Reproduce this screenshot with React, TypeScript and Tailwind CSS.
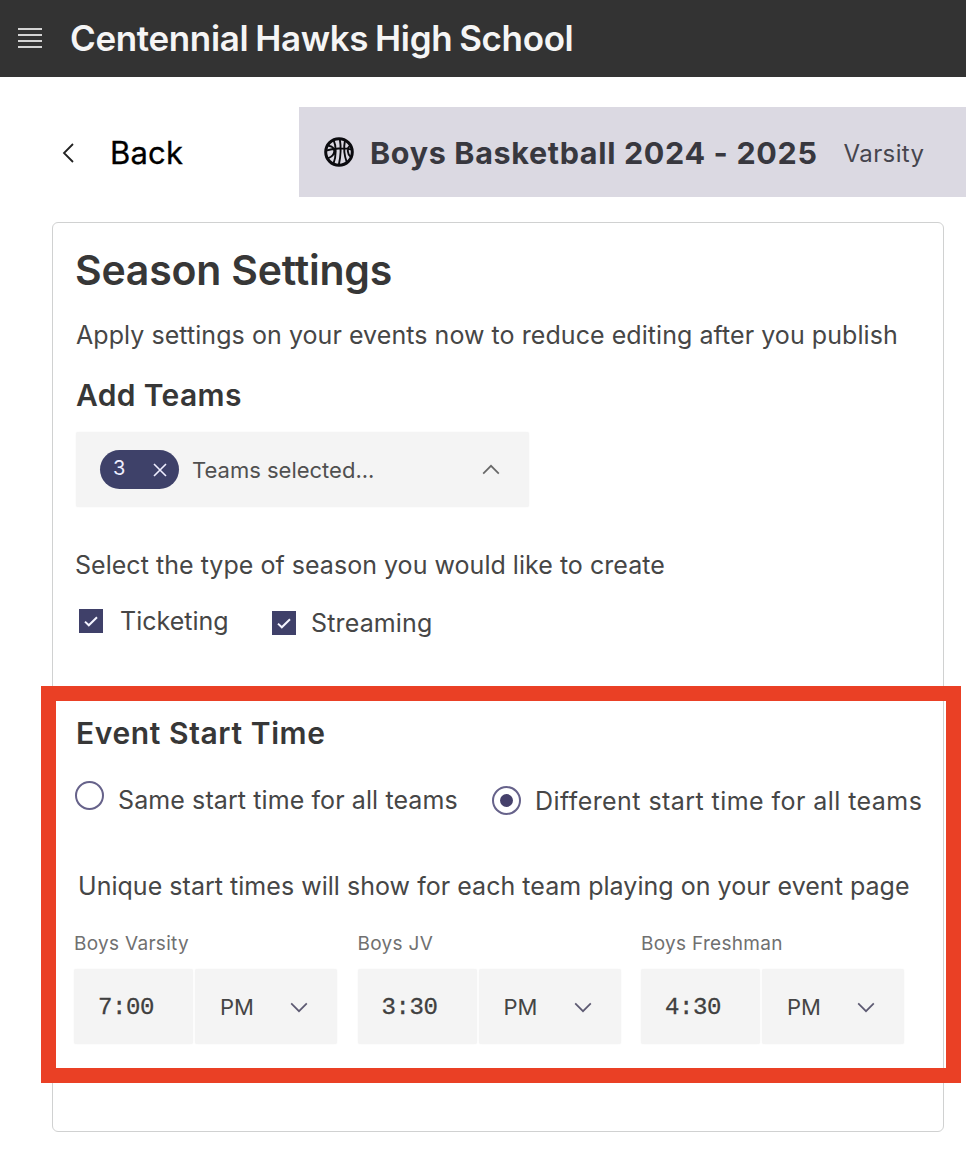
type IconProps = { className?: string };

function Chevron({ className = "" }: IconProps) {
  return (
    <svg viewBox="0 0 18 11" fill="none" stroke="currentColor" strokeWidth="1.7" className={`h-[11px] w-[18px] shrink-0 ${className}`}>
      <path d="M1.2 1.4 L9 9.2 L16.8 1.4" />
    </svg>
  );
}

function Basketball() {
  return (
    <svg viewBox="0 0 30 30" fill="none" stroke="#0b0b0f" className="size-[30px] shrink-0">
      <circle cx="15" cy="15" r="13.3" strokeWidth="3" />
      <path strokeWidth="1.9" d="M2 13.6C9 11.2 20 10.6 28 12.6M15.8 2C17.2 10 16.6 20 14.8 28M9.6 3.2C12.4 9 12.4 19 9.4 27M21 3.2C19.6 10 20 18 23 26M4.2 8.6C12.6 10 12 18 4.2 21.2M26 8.8C22.8 11 23 17 27 20.4" />
    </svg>
  );
}

function Checkbox() {
  return (
    <span className="flex size-6 shrink-0 items-center justify-center bg-[#3f4069]">
      <svg viewBox="0 0 14 11" fill="none" stroke="#f4f4ff" strokeWidth="2" className="h-[11px] w-[14px]">
        <path d="M1 5.6 L4.8 9.3 L13 1.2" />
      </svg>
    </span>
  );
}

function Radio({ checked = false }: { checked?: boolean }) {
  return (
    <span className="flex size-[29px] shrink-0 items-center justify-center rounded-full border-2 border-[#66628a] bg-white">
      {checked && <span className="size-[13px] rounded-full bg-[#45406b]" />}
    </span>
  );
}

function TimeField({ label, time }: { label: string; time: string }) {
  return (
    <div className="w-[263px]">
      <div className="h-[25px] text-[19px] leading-[25px] tracking-[0.3px] text-[#707070]">{label}</div>
      <div className="mt-[13px] flex h-[75px] gap-[2px]">
        <div className="flex w-[119px] items-center rounded-[2px] bg-[#f4f4f4] pt-[2px] pl-[24px] font-['Liberation_Mono',monospace] text-[24px] tracking-[-0.4px] text-[#404040] shadow-[0_0_2px_#f4f4f4] [-webkit-text-stroke:0.3px_#404040]">
          {time}
        </div>
        <div className="flex flex-1 items-center justify-between rounded-[2px] bg-[#f4f4f4] pt-px pr-[29px] pl-[25px] text-[22px] text-[#454545] shadow-[0_0_2px_#f4f4f4]">
          <span>PM</span>
          <Chevron className="text-[#5d5a72]" />
        </div>
      </div>
    </div>
  );
}

export default function App() {
  return (
    <div className="relative h-[1164px] w-[966px] overflow-hidden bg-white font-['Inter',sans-serif] text-[#464646]">
      <header className="flex h-[77px] items-center bg-[#333333] pl-[18px]">
        <svg viewBox="0 0 24 22" fill="none" stroke="#d4d4d4" strokeWidth="2" className="-mt-px h-[22px] w-6 shrink-0">
          <path d="M0 2H24M0 8H24M0 14H24M0 20H24" />
        </svg>
        <h1 className="ml-[28px] text-[35px] leading-none font-semibold tracking-[-0.36px] whitespace-nowrap text-[#f5f5f5] [word-spacing:-1.5px]">
          Centennial Hawks High School
        </h1>
      </header>

      <div className="mt-[30px] flex h-[90px]">
        <div className="flex w-[299px] items-center pl-[62px] text-black">
          <svg viewBox="0 0 12 20" fill="none" stroke="#222222" strokeWidth="1.8" className="mt-[2px] h-5 w-3 shrink-0">
            <path d="M11 1 L2 10 L11 19" />
          </svg>
          <span className="ml-[36px] text-[31px] leading-none tracking-[0.2px] [-webkit-text-stroke:0.3px_#000000]">Back</span>
        </div>
        <div className="flex flex-1 items-center bg-[#dbd9e2] pl-[25px] whitespace-nowrap">
          <Basketball />
          <span className="mt-[2px] ml-[16px] text-[30.5px] leading-none font-bold tracking-[0.66px] text-[#38383f]">
            Boys Basketball 2024 - 2025
          </span>
          <span className="mt-[3px] ml-[26px] text-[24px] leading-none tracking-[0.4px] text-[#46454e]">Varsity</span>
        </div>
      </div>

      <main className="mt-[25px] ml-[52px] h-[910px] w-[892px] rounded-[6px] border-[1.5px] border-[#d0d1d1] pt-px pl-[23px] whitespace-nowrap">
        <h2 className="-ml-px mt-[21px] text-[41px] leading-[50px] font-semibold tracking-[-0.22px] text-[#373737]">Season Settings</h2>
        <p className="mt-[23px] text-[25px] leading-[34px] tracking-[0.06px]">
          Apply settings on your events now to reduce editing after you publish
        </p>
        <h3 className="mt-[23px] text-[30px] leading-10 font-semibold tracking-[0.35px] text-[#373737]">Add Teams</h3>

        <div className="mt-[17px] flex h-[75px] w-[453px] items-center rounded-[2px] bg-[#f4f4f4] pr-[29px] pl-[24px] shadow-[0_0_2px_#f4f4f4]">
          <span className="flex h-[39px] w-[79px] items-center justify-between rounded-full bg-[#3e4169] pr-[12px] pl-[13px] text-[#eeeeff]">
            <span className="-mt-[3px] text-[20px] leading-none">3</span>
            <svg viewBox="0 0 14 14" fill="none" stroke="currentColor" strokeWidth="1.6" className="size-[14px]">
              <path d="M1 1 L13 13 M13 1 L1 13" />
            </svg>
          </span>
          <span className="ml-[13px] text-[22px] leading-none text-[#505050]">Teams selected...</span>
          <Chevron className="ml-auto rotate-180 text-[#686868]" />
        </div>

        <p className="-ml-px mt-[40px] text-[25px] leading-9 tracking-[0.03px]">Select the type of season you would like to create</p>

        <div className="mt-[21px] flex h-9 items-start pl-[3px] text-[25px] leading-9">
          <label className="-mt-px flex w-[193px] items-center">
            <Checkbox />
            <span className="ml-[17px]">Ticketing</span>
          </label>
          <label className="mt-px flex items-center">
            <Checkbox />
            <span className="ml-[15px] tracking-[0.15px]">Streaming</span>
          </label>
        </div>

        <h3 className="mt-[73px] text-[30px] leading-10 font-semibold tracking-[0.6px] text-[#373737]">Event Start Time</h3>

        <div className="mt-[27px] flex h-10 text-[25px] leading-10">
          <div className="-ml-px flex w-[417px]">
            <span className="mt-[1px]">
              <Radio />
            </span>
            <span className="ml-[14px] tracking-[0.1px]">Same start time for all teams</span>
          </div>
          <div className="flex">
            <span className="mt-[6px]">
              <Radio checked />
            </span>
            <span className="mt-px ml-[14px] tracking-[0.44px]">Different start time for all teams</span>
          </div>
        </div>

        <p className="mt-[48px] ml-[2px] text-[25px] leading-9 tracking-[0.03px]">
          Unique start times will show for each team playing on your event page
        </p>

        <div className="mt-[27px] -ml-[2px] flex gap-[20.5px]">
          <TimeField label="Boys Varsity" time="7:00" />
          <TimeField label="Boys JV" time="3:30" />
          <TimeField label="Boys Freshman" time="4:30" />
        </div>
      </main>

      <div className="pointer-events-none absolute top-[686px] left-[41px] h-[397px] w-[920px] border-[15px] border-[#ea4025]" />
    </div>
  );
}
